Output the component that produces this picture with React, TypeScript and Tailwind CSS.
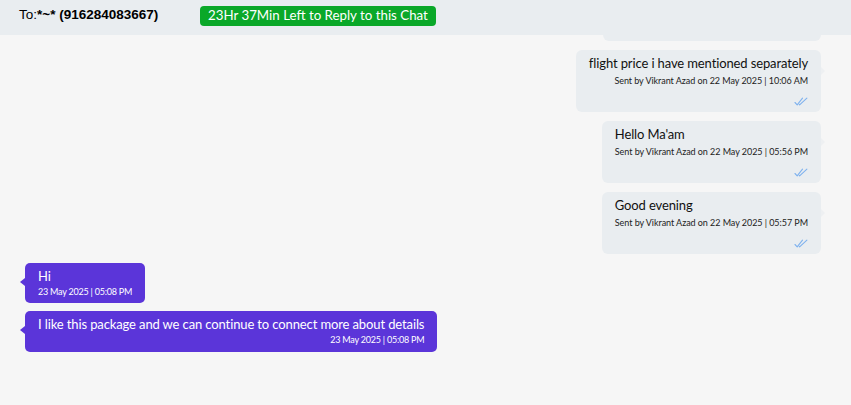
import React from "react";

const Ticks = () => (
  <svg width="14" height="9" viewBox="0 0 14 9" fill="none" stroke="#7fb2ee" strokeWidth="1.1" strokeLinecap="round" strokeLinejoin="round">
    <path d="M1 5.5 L3.2 7.8 L8.5 1.2" />
    <path d="M5.2 7.4 L5.6 7.8 L12.9 1.2" />
  </svg>
);

const Sent = ({ text, time }: { text: string; time: string }) => (
  <div className="relative self-end mr-[30px] bg-[#e9edf0] rounded-[6px] pl-[13px] pr-[13px] pt-[4px] pb-[6px] flex flex-col">
    <div className="text-[13px] leading-[19px] tracking-[-0.12px] text-[#111]">{text}</div>
    <div className="text-[9px] leading-[13px] tracking-[-0.05px] text-[#222] text-right mt-[1px]">Sent by Vikrant Azad on 22 May 2025 | {time}</div>
    <div className="flex justify-end mt-[9px] h-[10px] items-center"><Ticks /></div>
    <div className="absolute right-[-4px] top-[17px] w-0 h-0 border-y-[4px] border-y-transparent border-l-[4px] border-l-[#eef0f2]" />
  </div>
);

const Received = ({ text, last }: { text: string; last?: boolean }) => (
  <div className={`relative self-start ml-[25px] bg-[#5b35d9] rounded-[5px] pl-[13px] pr-[13px] pt-[4px] flex flex-col text-white ${last ? "pb-[6px] mt-[-1px]" : "pb-[5px]"}`}>
    <div className="text-[13px] leading-[18px] tracking-[-0.12px]">{text}</div>
    <div className="text-[9px] leading-[12px] tracking-[-0.22px] text-right mt-[1px]">23 May 2025 | 05:08 PM</div>
    <div className="absolute left-[-5px] top-[15px] w-0 h-0 border-y-[4px] border-y-transparent border-r-[5px] border-r-[#5b35d9]" />
  </div>
);

export default function App() {
  return (
    <div className="w-[851px] h-[405px] bg-[#f6f6f6] overflow-hidden flex flex-col" style={{ fontFamily: 'Lato, "Open Sans", sans-serif' }}>
      <div className="h-[35px] shrink-0 bg-[#e9edf0] flex items-center pl-[19px] relative z-10">
        <div className="text-[13.5px] text-black w-[181px] pb-[4px]" style={{ fontFamily: '"Liberation Sans", Arial, sans-serif' }}>
          To:<span className="font-bold">*~* (916284083667)</span>
        </div>
        <div className="bg-[#0aa829] text-white rounded-[4px] h-[20px] px-[8px] flex items-center text-[13.3px] mb-[4px]">
          23Hr 37Min Left to Reply to this Chat
        </div>
      </div>
      <div className="flex-1 overflow-hidden">
        <div className="flex flex-col gap-[9px] mt-[-56px]">
          <div className="self-end mr-[30px] w-[218px] h-[62px] bg-[#e9edf0] rounded-[6px]" />
          <Sent text="flight price i have mentioned separately" time="10:06 AM" />
          <Sent text="Hello Ma'am" time="05:56 PM" />
          <Sent text="Good evening" time="05:57 PM" />
          <Received text="Hi" />
          <Received text="I like this package and we can continue to connect more about details" last />
        </div>
      </div>
    </div>
  );
}
